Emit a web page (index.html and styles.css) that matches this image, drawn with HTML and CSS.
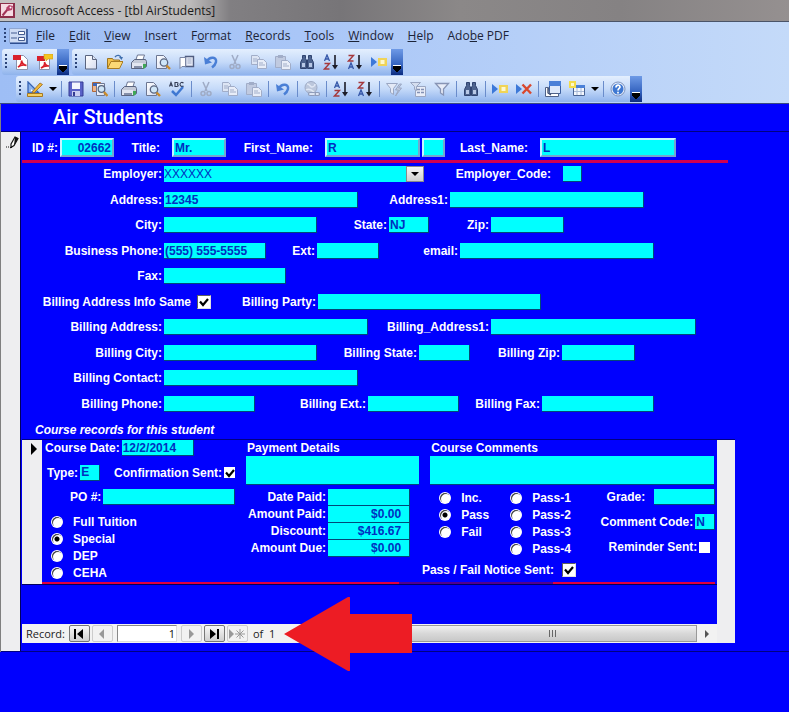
FILE: index.html
```html
<!DOCTYPE html>
<html lang="en">
<head>
    <meta charset="UTF-8">
    <meta name="viewport" content="width=device-width, initial-scale=1.0">
    <title>Microsoft Access - [tbl AirStudents]</title>
    <link rel="stylesheet" href="styles.css">
</head>
<body>
    <!-- icon set shared by both toolbars -->
    <svg class="icon-defs" width="0" height="0" aria-hidden="true">
        <defs>
            <linearGradient id="page-fill" x1="0" y1="0" x2="1" y2="1">
                <stop offset="0" stop-color="#fff"/><stop offset="1" stop-color="#d5dcf0"/>
            </linearGradient>
        </defs>
        <symbol id="i-pdf" viewBox="0 0 16 16">
            <path d="M3.500 1.500h7l4 4v10h-11z" fill="#fff" stroke="#8a93ad"/>
            <path d="M0 1h8v5H0z" fill="#d8202a"/>
            <path d="M5 13c2-1 4-4 3.500-6.500C9 9.500 11 11 13.500 11.500C10 10.500 7 11.500 5 13z" fill="none" stroke="#d8202a" stroke-width="1.600"/>
        </symbol>
        <symbol id="i-pdfmail" viewBox="0 0 16 16">
            <path d="M2.500 4.500h10v11h-10z" fill="#fff" stroke="#8a93ad"/>
            <path d="M0 2h8v5H0z" fill="#d8202a"/>
            <path d="M7 0h9v5h-5l-2 2v-2H7z" fill="#f3c522" stroke="#c9951c" stroke-width=".6"/>
            <path d="M4 14c2-1 4-3.500 3.500-6C8 10.500 10 12 12 12C9 11.500 6 12.500 4 14z" fill="none" stroke="#d8202a" stroke-width="1.600"/>
        </symbol>
        <symbol id="i-new" viewBox="0 0 16 16">
            <path d="M2.500 1.500h7l4 4v9.500h-11z" fill="url(#page-fill)" stroke="#59647f"/>
            <path d="M9.500 1.500v4h4" fill="#dfe5f4" stroke="#59647f"/>
        </symbol>
        <symbol id="i-open" viewBox="0 0 16 16">
            <path d="M0.500 14.500v-10h5l1 1.500h6v3" fill="#f2c04a" stroke="#9c7420"/>
            <path d="M0.500 14.500l3.500-7h12l-3.500 7z" fill="#fbd976" stroke="#a97c22"/>
            <path d="M8 3c2-2.500 5-2 6 .5" fill="none" stroke="#3f6fae" stroke-width="1.400"/>
            <path d="M12 3h4l-1.500 3z" fill="#3f6fae"/>
        </symbol>
        <symbol id="i-print" viewBox="0 0 16 16">
            <path d="M4.500 7l2-6h7l-2 6z" fill="#fff" stroke="#6c7692"/>
            <path d="M0.500 8.500l3-3h11l1 2v5l-3 2h-12z" fill="#c4cad8" stroke="#5b6580"/>
            <path d="M1 9h11v5H1z" fill="#e2e6f0"/>
            <path d="M3 12h8v2H3z" fill="#858fa8"/>
            <path d="M12 10h3v3l-3 2z" fill="#3ea756"/>
        </symbol>
        <symbol id="i-preview" viewBox="0 0 16 16">
            <path d="M1.500 1.500h7l3 3v10h-10z" fill="url(#page-fill)" stroke="#6c7692"/>
            <circle cx="9" cy="8.500" r="3.700" fill="#cfe6f8" stroke="#5a6681" stroke-width="1.300"/>
            <path d="M11.500 11.500l3.500 3.500" stroke="#c98b2c" stroke-width="2.400"/>
        </symbol>
        <symbol id="i-book" viewBox="0 0 16 16">
            <path d="M6.500 2.500h8v10h-8z" fill="#e4e9f5" stroke="#505d80" stroke-width="1.400"/>
            <path d="M1 3.500h5.500v9H3l-2 2z" fill="#fff" stroke="#7b86a4"/>
            <path d="M8.500 5h4M8.500 7h4M8.500 9h4" stroke="#a3adc7"/>
        </symbol>
        <symbol id="i-undo" viewBox="0 0 16 16">
            <path d="M4 7c3-5 10-4 9 1c-.5 2.500-2 4-4 5.500" fill="none" stroke="#4a7fd6" stroke-width="2.500"/>
            <path d="M1 3l1 7.500l7-2z" fill="#4a7fd6"/>
        </symbol>
        <symbol id="i-cut" viewBox="0 0 16 16">
            <path d="M5 1l4 9M11 1l-4 9" stroke="#9fabc5" stroke-width="1.500"/>
            <circle cx="5" cy="12.500" r="2" fill="none" stroke="#9fabc5" stroke-width="1.500"/>
            <circle cx="11" cy="12.500" r="2" fill="none" stroke="#9fabc5" stroke-width="1.500"/>
        </symbol>
        <symbol id="i-copy" viewBox="0 0 16 16">
            <path d="M0.500 1.500h6l2 2v7h-8z" fill="#dde5f4" stroke="#a1adc8"/>
            <path d="M6.500 5.500h6l3 3v6h-9z" fill="#e8edf8" stroke="#a1adc8"/>
            <path d="M2 5h4M2 7h4M8 9h4M8 11h6" stroke="#a1adc8"/>
        </symbol>
        <symbol id="i-paste" viewBox="0 0 16 16">
            <path d="M0.500 2.500h10v11h-10z" fill="#c0cae0" stroke="#a1adc8"/>
            <path d="M3 1h5v3H3z" fill="#a1adc8"/>
            <path d="M6.500 6.500h6l3 3v6h-9z" fill="#e8edf8" stroke="#a1adc8"/>
            <path d="M8 10h4M8 12h6" stroke="#a1adc8"/>
        </symbol>
        <symbol id="i-find" viewBox="0 0 16 16">
            <path d="M3.500 1.500h3v3l1 2v8h-6v-6l2-4zM9.500 1.500h3v3l2 4v6h-6v-8l1-2z" fill="#4c638f" stroke="#2f4370"/>
            <path d="M3 9h3v4H3zM10 9h3v4h-3z" fill="#b8c8e6"/>
            <path d="M7 6h2v3H7z" fill="#2f4370"/>
        </symbol>
        <symbol id="i-sortaz" viewBox="0 0 16 16">
            <path d="M1.500 7l2.500-6l2.500 6M2.500 5h3" fill="none" stroke="#3556a8" stroke-width="1.300"/>
            <path d="M1.500 9.500h5l-5 5.500h5" fill="none" stroke="#a5383c" stroke-width="1.400"/>
            <path d="M12 1v12" stroke="#1c1c28" stroke-width="1.600"/>
            <path d="M9 11h6l-3 4.500z" fill="#1c1c28"/>
        </symbol>
        <symbol id="i-sortza" viewBox="0 0 16 16">
            <path d="M1.500 1.500h5l-5 5.500h5" fill="none" stroke="#a5383c" stroke-width="1.400"/>
            <path d="M1.500 15l2.500-6l2.500 6M2.500 13h3" fill="none" stroke="#3556a8" stroke-width="1.300"/>
            <path d="M12 1v12" stroke="#1c1c28" stroke-width="1.600"/>
            <path d="M9 11h6l-3 4.500z" fill="#1c1c28"/>
        </symbol>
        <symbol id="i-newrec" viewBox="0 0 16 16">
            <path d="M0 3l6 5l-6 5z" fill="#3c78d8"/>
            <path d="M7 4h9v8H7z" fill="#f0d458"/>
            <path d="M9.500 6h4v4h-4z" fill="#fdf8d0"/>
        </symbol>
        <symbol id="i-delrec" viewBox="0 0 16 16">
            <path d="M0 3l6 5l-6 5z" fill="#3c78d8"/>
            <path d="M6.500 3.500l8.500 9M15 3.500l-8.500 9" stroke="#d9482e" stroke-width="2.400"/>
        </symbol>
        <symbol id="i-design" viewBox="0 0 16 16">
            <path d="M1 1v11h11z" fill="#8db4ee" stroke="#3462b4" stroke-width="1.300"/>
            <path d="M4 8v2h2z" fill="#fff"/>
            <path d="M5 11l8-9l2.500 1.500L7 12z" fill="#f0b93a" stroke="#9d6a1d" stroke-width=".8"/>
            <path d="M0.500 12.500h15v3h-15z" fill="#f4cf62" stroke="#a77920"/>
        </symbol>
        <symbol id="i-save" viewBox="0 0 16 16">
            <path d="M1 1h14v14H1z" fill="#5a62c8" stroke="#343b93"/>
            <path d="M4 1.500h8V8H4z" fill="#f3f5fd"/>
            <path d="M4 10h8v5H4z" fill="#c8cdf0"/>
            <path d="M5 11h2v4H5z" fill="#343b93"/>
        </symbol>
        <symbol id="i-filesearch" viewBox="0 0 16 16">
            <path d="M0.500 1.500h8v9h-8z" fill="#f0b58a" stroke="#b06838"/>
            <path d="M4.500 2.500h8v12h-8z" fill="url(#page-fill)" stroke="#6c7692"/>
            <path d="M1 2h4v3H1z" fill="#3d66b8"/>
            <circle cx="9.500" cy="8" r="3.300" fill="#cfe6f8" stroke="#5a6681" stroke-width="1.300"/>
            <path d="M12 11l3.500 4" stroke="#c98b2c" stroke-width="2.400"/>
        </symbol>
        <symbol id="i-spell" viewBox="0 0 16 16">
            <path d="M0.500 5.500l1.500-4l1.500 4M1 4.300h2M6 1.500v4h2c2 0 1-2 0-2c1 0 1.500-2 0-2zM14.500 2c-2-1.500-3.500 0-3.500 1.500s2 2.500 3.500 1.500" fill="none" stroke="#333c55" stroke-width="1.100"/>
            <path d="M3 10l4 4l7-8" fill="none" stroke="#3f78d2" stroke-width="2.500"/>
        </symbol>
        <symbol id="i-link" viewBox="0 0 16 16">
            <circle cx="7" cy="6.500" r="6" fill="#bcc7dc" stroke="#9fabc5"/>
            <path d="M3 3c3 0 3 3 5 3s3-2 3-3M2 9c3-2 6 0 8 2" fill="none" stroke="#e0e7f4" stroke-width="1.500"/>
            <path d="M6 11.500h4a1.500 1.500 0 0 1 0 3H6a1.500 1.500 0 0 1 0-3zM11 11.500h3a1.500 1.500 0 0 1 0 3h-3" fill="#dde5f4" stroke="#8f9cba" stroke-width="1.200"/>
        </symbol>
        <symbol id="i-filtersel" viewBox="0 0 16 16">
            <path d="M0.500 2.500h11l-4 5v6l-3-2v-4z" fill="#e3e9f6" stroke="#9aa6c2"/>
            <path d="M13.500 3l-4 6h3l-3 6l6-8h-3l3-4z" fill="#c3cde2" stroke="#9aa6c2"/>
        </symbol>
        <symbol id="i-filterform" viewBox="0 0 16 16">
            <path d="M5.500 5.500h10v10h-10z" fill="#e8edf8" stroke="#9aa6c2"/>
            <path d="M7 8.500h3M11 8.500h3M7 11.500h3M11 11.500h3" stroke="#8391b4" stroke-width="1.500"/>
            <path d="M0.500 1.500h10l-4 4v4l-2-1v-3z" fill="#d5deef" stroke="#9aa6c2"/>
        </symbol>
        <symbol id="i-filter" viewBox="0 0 16 16">
            <path d="M1.500 2.500h13l-5 5.500v6l-3-2v-4z" fill="#e8edf8" stroke="#8794b4" stroke-width="1.300"/>
        </symbol>
        <symbol id="i-database" viewBox="0 0 16 16">
            <path d="M4.500 0.500h11v12h-11z" fill="#dce8fb" stroke="#3b5f9f"/>
            <path d="M4 0h12v5H4z" fill="#4a80d8"/>
            <path d="M0.500 6.500h3l1 6h9v3h-13z" fill="#fff" stroke="#4e6188"/>
            <path d="M3 7v5l3 2" fill="none" stroke="#39496d" stroke-width="1.300"/>
        </symbol>
        <symbol id="i-newobj" viewBox="0 0 16 16">
            <path d="M4.500 4.500h11v10h-11z" fill="#f4f7fd" stroke="#4a6494"/>
            <path d="M4 4h12v3H4z" fill="#4a80d8"/>
            <path d="M8 7v7M12 7v7M5 10.500h10" stroke="#a9bad8"/>
            <path d="M0 0h7v7H0z" fill="#f3dc4c"/>
            <path d="M2 2h3v3H2z" fill="#fdf8c8"/>
        </symbol>
        <symbol id="i-help" viewBox="0 0 16 16">
            <circle cx="8" cy="8" r="7" fill="#e6eefb" stroke="#7e93bd"/>
            <circle cx="8" cy="8" r="5.500" fill="#3f78d2"/>
            <path d="M6 6.500c0-3 4-3 4-.5c0 1.500-2 1.500-2 3.500M8 10.800v1.600" fill="none" stroke="#fff" stroke-width="1.700"/>
        </symbol>
        <symbol id="i-caret" viewBox="0 0 8 8"><path d="M0 2h8l-4 4z" fill="#000"/></symbol>
    </svg>

    <header class="titlebar">
        <svg class="app-icon" width="16" height="16" viewBox="0 0 16 16" aria-hidden="true">
            <path d="M0 0h15v15H0z" fill="#8e2e4a"/>
            <path d="M1 1h12v12H1z" fill="#f6dbe3"/>
            <path d="M2.500 12.500l5-6" stroke="#a23358" stroke-width="2"/>
            <path d="M6 5l3-3l4 1l-1 4l-4 1z" fill="#b8406a"/>
            <circle cx="10.500" cy="4.500" r="1" fill="#fff"/>
        </svg>
        <span class="title">Microsoft Access - [tbl AirStudents]</span>
    </header>

    <div class="command-bars">
        <nav class="menubar">
            <span class="grip"></span>
            <svg class="form-icon" width="20" height="16" viewBox="0 0 20 16" aria-hidden="true">
                <path d="M0.500 0.500h17v14h-17z" fill="#cfdcf4" stroke="#8fa6d2"/>
                <path d="M18 1v14.500H1" fill="none" stroke="#2d4d90" stroke-width="1.500"/>
                <path d="M2 5h6M2 10h6" stroke="#445c90"/>
                <path d="M9.500 3.500h6v3h-6zM9.500 9.500h6v3h-6z" fill="#fff" stroke="#445c90"/>
            </svg>
            <button type="button"><u>F</u>ile</button>
            <button type="button"><u>E</u>dit</button>
            <button type="button"><u>V</u>iew</button>
            <button type="button"><u>I</u>nsert</button>
            <button type="button">F<u>o</u>rmat</button>
            <button type="button"><u>R</u>ecords</button>
            <button type="button"><u>T</u>ools</button>
            <button type="button"><u>W</u>indow</button>
            <button type="button"><u>H</u>elp</button>
            <button type="button">Ado<u>b</u>e PDF</button>
        </nav>

        <div class="bar-line">
            <div class="toolbar">
                <span class="grip"></span>
                <button type="button" class="tool" aria-label="Convert to PDF"><svg><use href="#i-pdf"/></svg></button>
                <button type="button" class="tool" aria-label="Email as PDF"><svg><use href="#i-pdfmail"/></svg></button>
                <button type="button" class="toolbar-end" aria-label="Toolbar options"></button>
            </div>
            <div class="toolbar">
                <span class="grip"></span>
                <button type="button" class="tool" aria-label="New"><svg><use href="#i-new"/></svg></button>
                <button type="button" class="tool" aria-label="Open"><svg><use href="#i-open"/></svg></button>
                <button type="button" class="tool" aria-label="Print"><svg><use href="#i-print"/></svg></button>
                <button type="button" class="tool" aria-label="Print preview"><svg><use href="#i-preview"/></svg></button>
                <button type="button" class="tool" aria-label="Research"><svg><use href="#i-book"/></svg></button>
                <button type="button" class="tool" aria-label="Undo"><svg><use href="#i-undo"/></svg></button>
                <button type="button" class="tool" aria-label="Cut"><svg><use href="#i-cut"/></svg></button>
                <button type="button" class="tool" aria-label="Copy"><svg><use href="#i-copy"/></svg></button>
                <button type="button" class="tool" aria-label="Paste"><svg><use href="#i-paste"/></svg></button>
                <button type="button" class="tool" aria-label="Find"><svg><use href="#i-find"/></svg></button>
                <button type="button" class="tool" aria-label="Sort ascending"><svg><use href="#i-sortaz"/></svg></button>
                <button type="button" class="tool" aria-label="Sort descending"><svg><use href="#i-sortza"/></svg></button>
                <button type="button" class="tool" aria-label="New record"><svg><use href="#i-newrec"/></svg></button>
                <button type="button" class="toolbar-end" aria-label="Toolbar options"></button>
            </div>
        </div>

        <div class="bar-line bar-line-form">
            <div class="toolbar">
                <span class="grip"></span>
                <button type="button" class="tool" aria-label="Design view"><svg><use href="#i-design"/></svg></button>
                <button type="button" class="tool-caret" aria-label="Choose view"><svg><use href="#i-caret"/></svg></button>
                <span class="sep"></span>
                <button type="button" class="tool" aria-label="Save"><svg><use href="#i-save"/></svg></button>
                <button type="button" class="tool" aria-label="File search"><svg><use href="#i-filesearch"/></svg></button>
                <span class="sep"></span>
                <button type="button" class="tool" aria-label="Print"><svg><use href="#i-print"/></svg></button>
                <button type="button" class="tool" aria-label="Print preview"><svg><use href="#i-preview"/></svg></button>
                <button type="button" class="tool" aria-label="Spelling"><svg><use href="#i-spell"/></svg></button>
                <span class="sep"></span>
                <button type="button" class="tool" aria-label="Cut"><svg><use href="#i-cut"/></svg></button>
                <button type="button" class="tool" aria-label="Copy"><svg><use href="#i-copy"/></svg></button>
                <button type="button" class="tool" aria-label="Paste"><svg><use href="#i-paste"/></svg></button>
                <span class="sep"></span>
                <button type="button" class="tool" aria-label="Undo"><svg><use href="#i-undo"/></svg></button>
                <span class="sep"></span>
                <button type="button" class="tool" aria-label="Insert hyperlink"><svg><use href="#i-link"/></svg></button>
                <span class="sep"></span>
                <button type="button" class="tool" aria-label="Sort ascending"><svg><use href="#i-sortaz"/></svg></button>
                <button type="button" class="tool" aria-label="Sort descending"><svg><use href="#i-sortza"/></svg></button>
                <span class="sep"></span>
                <button type="button" class="tool" aria-label="Filter by selection"><svg><use href="#i-filtersel"/></svg></button>
                <button type="button" class="tool" aria-label="Filter by form"><svg><use href="#i-filterform"/></svg></button>
                <button type="button" class="tool" aria-label="Apply filter"><svg><use href="#i-filter"/></svg></button>
                <span class="sep"></span>
                <button type="button" class="tool" aria-label="Find"><svg><use href="#i-find"/></svg></button>
                <span class="sep"></span>
                <button type="button" class="tool" aria-label="New record"><svg><use href="#i-newrec"/></svg></button>
                <button type="button" class="tool" aria-label="Delete record"><svg><use href="#i-delrec"/></svg></button>
                <span class="sep"></span>
                <button type="button" class="tool" aria-label="Database window"><svg><use href="#i-database"/></svg></button>
                <button type="button" class="tool" aria-label="New object"><svg><use href="#i-newobj"/></svg></button>
                <button type="button" class="tool-caret" aria-label="Choose object"><svg><use href="#i-caret"/></svg></button>
                <span class="sep"></span>
                <button type="button" class="tool" aria-label="Help"><svg><use href="#i-help"/></svg></button>
                <button type="button" class="toolbar-end" aria-label="Toolbar options"></button>
            </div>
        </div>
    </div>

    <main class="form-window">
        <h1>Air Students</h1>

        <div class="record">
            <div class="selector">
                <svg width="14" height="14" viewBox="0 0 14 14" aria-hidden="true">
                    <path d="M5 9l4-7l3 1.500l-4 7l-3 2z" fill="#fff" stroke="#111" stroke-width="1.200"/>
                    <path d="M9 2l3 1.500l-4 7z" fill="#111"/>
                    <path d="M0 12h1M2 12h1M4 12.500h2" stroke="#111"/>
                </svg>
            </div>

            <form class="record-body">
                <div class="row row-name">
                    <label for="id-no">ID #:</label><input type="text" id="id-no" class="raised number" value="02662">
                    <label for="title" class="wide">Title:</label><input type="text" id="title" class="raised" value="Mr.">
                    <label for="first" class="wide">First_Name:</label><input type="text" id="first" class="raised" value="R">
                    <input type="text" class="raised middle" aria-label="Middle initial">
                    <label for="last" class="wide">Last_Name:</label><input type="text" id="last" class="raised" value="L">
                </div>
                <div class="rule"></div>

                <div class="rows">
                    <div class="row row-employer">
                        <label for="employer">Employer:</label>
                        <div class="combo">
                            <select id="employer"><option>XXXXXX</option></select>
                            <span class="combo-arrow"><svg width="8" height="8"><use href="#i-caret"/></svg></span>
                        </div>
                        <label for="employer-code" class="wide">Employer_Code:</label><input type="text" id="employer-code">
                    </div>
                    <div class="row row-address">
                        <label for="address">Address:</label><input type="text" id="address" value="12345">
                        <label for="address1">Address1:</label><input type="text" id="address1">
                    </div>
                    <div class="row row-city">
                        <label for="city">City:</label><input type="text" id="city">
                        <label for="state">State:</label><input type="text" id="state" value="NJ">
                        <label for="zip">Zip:</label><input type="text" id="zip">
                    </div>
                    <div class="row row-phone">
                        <label for="phone">Business Phone:</label><input type="text" id="phone" value="(555) 555-5555">
                        <label for="ext">Ext:</label><input type="text" id="ext">
                        <label for="email">email:</label><input type="text" id="email">
                    </div>
                    <div class="row row-fax">
                        <label for="fax">Fax:</label><input type="text" id="fax">
                    </div>
                    <div class="row row-same">
                        <label for="same" class="check-label">Billing Address Info Same</label><input type="checkbox" id="same" class="sunken" checked>
                        <label for="party">Billing Party:</label><input type="text" id="party">
                    </div>
                    <div class="row row-baddress">
                        <label for="baddress">Billing Address:</label><input type="text" id="baddress">
                        <label for="baddress1">Billing_Address1:</label><input type="text" id="baddress1">
                    </div>
                    <div class="row row-bcity">
                        <label for="bcity">Billing City:</label><input type="text" id="bcity">
                        <label for="bstate">Billing State:</label><input type="text" id="bstate">
                        <label for="bzip">Billing Zip:</label><input type="text" id="bzip">
                    </div>
                    <div class="row row-bcontact">
                        <label for="bcontact">Billing Contact:</label><input type="text" id="bcontact">
                    </div>
                    <div class="row row-bphone">
                        <label for="bphone">Billing Phone:</label><input type="text" id="bphone">
                        <label for="bext">Billing Ext.:</label><input type="text" id="bext">
                        <label for="bfax">Billing Fax:</label><input type="text" id="bfax">
                    </div>
                </div>

                <h2>Course records for this student</h2>

                <section class="subform">
                    <div class="subform-main">
                        <div class="course">
                            <div class="course-selector">
                                <svg width="8" height="12" viewBox="0 0 8 12" aria-hidden="true"><path d="M1 0l6 6l-6 6z" fill="#000"/></svg>
                            </div>
                            <div class="course-body">
                                <div class="course-info">
                                    <div class="line line-date">
                                        <label for="course-date">Course Date:</label><input type="text" id="course-date" value="12/2/2014">
                                    </div>
                                    <div class="line line-type">
                                        <label for="type">Type:</label><input type="text" id="type" value="E">
                                        <label for="confirm">Confirmation Sent:</label><input type="checkbox" id="confirm" checked>
                                    </div>
                                    <div class="line line-po">
                                        <label for="po">PO #:</label><input type="text" id="po">
                                    </div>
                                    <div class="options tuition">
                                        <label><input type="radio" name="tuition">Full Tuition</label>
                                        <label><input type="radio" name="tuition" checked>Special</label>
                                        <label><input type="radio" name="tuition">DEP</label>
                                        <label><input type="radio" name="tuition">CEHA</label>
                                    </div>
                                </div>

                                <div class="payment">
                                    <label for="details" class="heading">Payment Details</label>
                                    <textarea id="details"></textarea>
                                    <div class="amounts">
                                        <label for="paid-date">Date Paid:</label><input type="text" id="paid-date" class="number">
                                        <label for="paid">Amount Paid:</label><input type="text" id="paid" class="number" value="$0.00">
                                        <label for="discount">Discount:</label><input type="text" id="discount" class="number" value="$416.67">
                                        <label for="due">Amount Due:</label><input type="text" id="due" class="number" value="$0.00">
                                    </div>
                                </div>

                                <div class="comments">
                                    <label for="course-comments" class="heading">Course Comments</label>
                                    <textarea id="course-comments"></textarea>
                                    <div class="results">
                                        <div class="options">
                                            <label><input type="radio" name="result">Inc.</label>
                                            <label><input type="radio" name="result" checked>Pass</label>
                                            <label><input type="radio" name="result">Fail</label>
                                        </div>
                                        <div class="options">
                                            <label><input type="radio" name="pass-no">Pass-1</label>
                                            <label><input type="radio" name="pass-no">Pass-2</label>
                                            <label><input type="radio" name="pass-no">Pass-3</label>
                                            <label><input type="radio" name="pass-no">Pass-4</label>
                                        </div>
                                        <div class="grading">
                                            <div class="line line-grade"><label for="grade">Grade:</label><input type="text" id="grade"></div>
                                            <div class="line line-code"><label for="code">Comment Code:</label><input type="text" id="code" value="N"></div>
                                            <div class="line line-reminder"><label for="reminder">Reminder Sent:</label><input type="checkbox" id="reminder"></div>
                                        </div>
                                    </div>
                                </div>

                                <div class="notice">
                                    <label for="notice">Pass / Fail Notice Sent:</label><input type="checkbox" id="notice" class="sunken" checked>
                                </div>
                                <div class="course-rule"></div>
                            </div>
                        </div>

                        <div class="record-nav">
                            <label for="record-no">Record:</label>
                            <button type="button" aria-label="First record">
                                <svg width="12" height="10" viewBox="0 0 12 10"><path d="M1 0h2v10H1zM10 0v10L4 5z" fill="#000"/></svg>
                            </button>
                            <button type="button" class="off" aria-label="Previous record">
                                <svg width="12" height="10" viewBox="0 0 12 10"><path d="M8 0v10L3 5z" fill="#999"/></svg>
                            </button>
                            <input type="text" id="record-no" value="1">
                            <button type="button" class="off" aria-label="Next record">
                                <svg width="12" height="10" viewBox="0 0 12 10"><path d="M4 0v10l5-5z" fill="#999"/></svg>
                            </button>
                            <button type="button" aria-label="Last record">
                                <svg width="12" height="10" viewBox="0 0 12 10"><path d="M2 0v10l6-5zM9 0h2v10H9z" fill="#000"/></svg>
                            </button>
                            <button type="button" class="off" aria-label="New record">
                                <svg width="16" height="10" viewBox="0 0 16 10"><path d="M0 0v10l5-5z" fill="#999"/><path d="M11 0v10M6 5h10M7.500 1.500l7 7M14.500 1.500l-7 7" stroke="#999"/></svg>
                            </button>
                            <span class="record-count">of&nbsp; 1</span>
                            <div class="hscroll">
                                <div class="thumb"><i></i><i></i><i></i></div>
                                <button type="button" class="scroll-right" aria-label="Scroll right">
                                    <svg width="6" height="8" viewBox="0 0 6 8"><path d="M1 0v8l4-4z" fill="#555"/></svg>
                                </button>
                            </div>
                            <svg class="callout" width="130" height="74" viewBox="0 0 130 74" aria-hidden="true">
                                <path d="M0 37L64 0q2-1 2 1V17H128V56H66V73q0 2-2 1z" fill="#ed1c24"/>
                            </svg>
                        </div>
                    </div>
                    <div class="vscroll"></div>
                </section>
            </form>
        </div>
    </main>
</body>
</html>
```
FILE: styles.css
```css
* {
    box-sizing: border-box;
}
body {
    margin: 0;
    min-height: 100vh;
    background-color: #0000fe;
    color: #fff;
    font-family: "Liberation Sans", Arial, sans-serif;
    font-size: 12px;
    font-weight: bold;
    line-height: 16px;
}
button,
input,
select,
textarea {
    font: inherit;
    margin: 0;
    padding: 0;
    border: none;
    border-radius: 0;
    min-width: 0;
}
button {
    background: none;
    color: inherit;
    display: flex;
    align-items: center;
    justify-content: center;
}
.icon-defs {
    display: block;
}

/* Title bar and menus */
.titlebar {
    display: flex;
    align-items: center;
    gap: 5px;
    height: 22px;
    border-bottom: 1px solid #4a5468;
    background: linear-gradient(90deg, #c4c2c2 0, #bdbbbb 190px, #817f82 230px, #777578 340px, #8b8888 460px, #858283 620px, #959090 100%);
    color: #1a1a1a;
    font-family: "Open Sans", "Noto Sans", sans-serif;
    font-weight: normal;
}
.command-bars {
    background: linear-gradient(90deg, #9ebef5 0, #a9c6f7 300px, #c4daf9 100%);
    border-bottom: 1px solid #3a4a80;
    color: #1c2438;
}
.menubar {
    display: flex;
    align-items: center;
    height: 27px;
    padding-left: 4px;
    font-family: "Open Sans", "Noto Sans", sans-serif;
    font-weight: normal;
}
.menubar button {
    padding: 0 7px;
}
.form-icon {
    margin-left: 3px;
}
.grip {
    width: 2px;
    height: 16px;
    background: repeating-linear-gradient(#2c4478 0 2px, transparent 2px 4px);
}

/* Toolbars */
.bar-line {
    display: flex;
    gap: 3px;
    padding-left: 2px;
    height: 27px;
}
.bar-line-form {
    padding-left: 16px;
}
.toolbar {
    display: flex;
    align-items: center;
    height: 26px;
    padding-left: 3px;
    border-radius: 3px;
    background: linear-gradient(#e4effe, #c5daf9 50%, #8fb3ec);
}
.toolbar .grip {
    margin-right: 2px;
}
.tool {
    width: 24px;
    height: 24px;
}
.tool svg {
    width: 16px;
    height: 16px;
}
.tool-caret {
    width: 12px;
    height: 24px;
}
.tool-caret svg {
    width: 8px;
    height: 8px;
}
.sep {
    width: 1px;
    height: 16px;
    margin: 0 2px;
    background-color: #6a8ccb;
}
.toolbar-end {
    align-self: stretch;
    width: 12px;
    background: linear-gradient(#6e9ae6, #3564c0 60%, #0c2c80);
}
.toolbar-end::after {
    content: "";
    align-self: flex-end;
    width: 8px;
    height: 8px;
    margin-bottom: 2px;
    background: linear-gradient(#fff 0 1px, transparent 1px 3px), conic-gradient(from 315deg at 50% 90%, #000 90deg, transparent 0);
}

/* Form window */
.form-window {
    border-left: 1px solid #808080;
}
h1 {
    margin: 0;
    padding-left: 52px;
    height: 28px;
    border-bottom: 1px solid #000080;
    font-family: Roboto, Arial, sans-serif;
    font-size: 20px;
    font-weight: 500;
    line-height: 26px;
}
.record {
    display: grid;
    grid-template-columns: 20px 1fr;
    border-bottom: 1px solid #000080;
}
.selector {
    background-color: #eeeef0;
    border-right: 1px solid #000060;
    padding: 3px 5px 0;
}
.record-body {
    padding: 6px 0 8px 1px;
}

.row {
    display: grid;
    align-items: center;
}
.row label,
.amounts label {
    text-align: right;
    padding-right: 2px;
    white-space: nowrap;
}
.row label.wide {
    padding-right: 12px;
}
.row label.check-label {
    padding-right: 6px;
}
.line label,
.notice label {
    white-space: nowrap;
}

input[type="text"],
select,
textarea {
    width: 100%;
    background-color: #00ffff;
    color: #0030c0;
    outline: none;
}
input[type="text"] {
    height: 16px;
    padding: 0 1px;
    border-right: 1px solid #004878;
    border-bottom: 1px solid #004878;
}
input.number {
    text-align: right;
}
.row input.raised {
    height: 19px;
    border: 2px solid;
    border-color: #c8f4ff #70a8d0 #70a8d0 #c8f4ff;
}
.middle {
    grid-column: 8;
}

/* Column tracks keep the form's own proportions at any window width */
.row-name {
    grid-template-columns: 38fr 54fr 58fr 54fr 99fr 95fr 2fr 23fr 95fr 136fr 113fr;
}
.rule {
    width: 92%;
    height: 3px;
    margin: 3px 0;
    background-color: #d00050;
}
.rows .row {
    height: 16px;
    margin-bottom: 10px;
}
.rows .row:nth-child(even) {
    margin-bottom: 9px;
}
.row-employer {
    grid-template-columns: 142fr 260fr 139fr 19fr 207fr;
}
.row-address {
    grid-template-columns: 142fr 194fr 92fr 194fr 145fr;
}
.row-city {
    grid-template-columns: 142fr 153fr 72fr 40fr 62fr 73fr 225fr;
}
.row-phone {
    grid-template-columns: 142fr 102fr 51fr 62fr 81fr 194fr 135fr;
}
.row-fax {
    grid-template-columns: 142fr 122fr 503fr;
}
.row-same {
    grid-template-columns: 175fr 14fr 107fr 223fr 248fr;
}
.row-baddress {
    grid-template-columns: 142fr 204fr 123fr 205fr 93fr;
}
.row-bcity {
    grid-template-columns: 142fr 153fr 102fr 51fr 92fr 73fr 154fr;
}
.row-bcontact {
    grid-template-columns: 142fr 194fr 431fr;
}
.row-bphone {
    grid-template-columns: 142fr 91fr 113fr 91fr 83fr 112fr 135fr;
}

.combo {
    position: relative;
    height: 16px;
}
.combo select {
    display: block;
    height: 16px;
    appearance: none;
    font-weight: normal;
}
.combo-arrow {
    position: absolute;
    top: 0;
    right: 0;
    width: 18px;
    height: 16px;
    display: flex;
    align-items: center;
    justify-content: center;
    border: 1px solid #8a8a8a;
    background: linear-gradient(#f6f6f6, #cfcfcf);
    pointer-events: none;
}

input[type="checkbox"] {
    appearance: none;
    flex: none;
    width: 11px;
    height: 11px;
    background: #fff center / 10px 10px no-repeat;
}
input[type="checkbox"].sunken {
    width: 14px;
    height: 14px;
    border: 1px solid;
    border-color: #606060 #e0e0e0 #e0e0e0 #606060;
}
input[type="checkbox"]:checked {
    background-image: url('data:image/svg+xml,<svg xmlns="http://www.w3.org/2000/svg" viewBox="0 0 10 10"><path d="M1 4.500l3 3.500l5-6" fill="none" stroke="black" stroke-width="2.200"/></svg>');
}
input[type="radio"] {
    appearance: none;
    flex: none;
    width: 12px;
    height: 12px;
    border-radius: 50%;
    border: 1px dashed #fff;
    background-color: #fff;
    box-shadow: inset 1px 1px 0 #404040;
}
input[type="radio"]:checked {
    background-image: radial-gradient(circle, #000 2px, transparent 3px);
}

h2 {
    margin: 0;
    padding-left: 13px;
    font-size: 12px;
    font-style: italic;
    line-height: 18px;
}

/* Course subform */
.subform {
    display: grid;
    grid-template-columns: minmax(0, 1fr) 18px;
    width: 93%;
    border-top: 1px solid #000080;
}
.vscroll {
    background-color: #eeeef0;
}
.course {
    display: grid;
    grid-template-columns: 20px minmax(0, 1fr);
    margin-bottom: 39px;
    border-bottom: 1px solid #000060;
}
.course-selector {
    background-color: #eeeef0;
    padding: 3px 8px;
}
.course-body {
    display: grid;
    grid-template-columns: 204fr 184fr 287fr;
}
.course-info {
    grid-row: 1 / 3;
    padding-right: 11px;
}
.line {
    display: flex;
    align-items: center;
    gap: 2px;
    height: 16px;
}
.line-date {
    padding-left: 3px;
}
#course-date {
    width: 72px;
}
.line-type {
    margin: 8px 0;
    height: 17px;
    padding-left: 5px;
}
#type,
#code {
    flex: none;
    width: 20px;
}
.line-type label:nth-of-type(2) {
    margin-left: auto;
}
.line-po {
    padding-left: 28px;
}
.options label {
    display: flex;
    align-items: center;
    gap: 10px;
    height: 17px;
}
.tuition {
    padding: 8px 0 0 9px;
}
.heading {
    display: block;
    padding-left: 1px;
}
textarea {
    display: block;
    height: 29px;
    border-bottom: 1px solid #004878;
    resize: none;
}
.payment textarea {
    width: 94%;
}
.comments textarea {
    width: 99%;
}
.amounts {
    display: grid;
    grid-template-columns: 82fr 82fr 20fr;
    margin-top: 4px;
}
.amounts label {
    grid-column: 1;
}
.amounts input[type="text"] {
    height: 17px;
    padding-right: 8px;
}
.results {
    display: grid;
    grid-template-columns: 71fr 93fr 123fr;
    margin-top: 4px;
}
.results .options {
    padding-left: 9px;
}
.grading {
    display: flex;
    flex-direction: column;
    align-items: flex-end;
    gap: 9px;
    padding-right: 2px;
}
.line-grade {
    gap: 9px;
}
#grade {
    width: 61px;
}
.line-reminder {
    padding-right: 5px;
}
.notice {
    grid-column: 2 / 4;
    display: flex;
    align-items: center;
    justify-content: flex-end;
    gap: 8px;
    height: 25px;
    padding-right: 30%;
}
.course-rule {
    grid-column: 1 / 4;
    height: 2px;
    margin-right: 2px;
    background: linear-gradient(90deg, #e00040 0 53%, #500090 53% 76%, #e00040 76%);
}

/* Record navigation */
.record-nav {
    position: relative;
    display: flex;
    align-items: center;
    gap: 2px;
    height: 19px;
    padding-left: 4px;
    background-color: #f2f2f2;
    color: #222;
    font-family: "Open Sans", "Noto Sans", sans-serif;
    font-size: 11px;
    font-weight: normal;
}
.record-nav label {
    margin-right: 2px;
}
.record-nav > button {
    flex: none;
    width: 21px;
    height: 17px;
    border: 1px solid #777;
    border-radius: 2px;
    background: linear-gradient(#f8f8f8, #cfcfcf);
}
.record-nav > button.off {
    border-color: #ccc;
    background: #f2f2f2;
}
#record-no {
    flex: none;
    width: 60px;
    height: 17px;
    margin: 0 2px;
    border: 1px solid #888;
    border-right-color: #ddd;
    border-bottom-color: #ddd;
    background-color: #fff;
    color: #111;
    text-align: right;
}
.record-count {
    flex: none;
    margin-left: 3px;
}
.hscroll {
    flex: 1;
    display: flex;
    height: 17px;
    margin-left: 40px;
}
.thumb {
    flex: 1;
    display: flex;
    align-items: center;
    justify-content: center;
    gap: 2px;
    padding-left: 90px;
    border: 1px solid #999;
    background: linear-gradient(#f0f0f0, #d8d8d8 50%, #c8c8c8);
}
.thumb i {
    width: 1px;
    height: 7px;
    background-color: #666;
}
.scroll-right {
    width: 20px;
}
.callout {
    position: absolute;
    top: -27px;
    left: 262px;
}
```
